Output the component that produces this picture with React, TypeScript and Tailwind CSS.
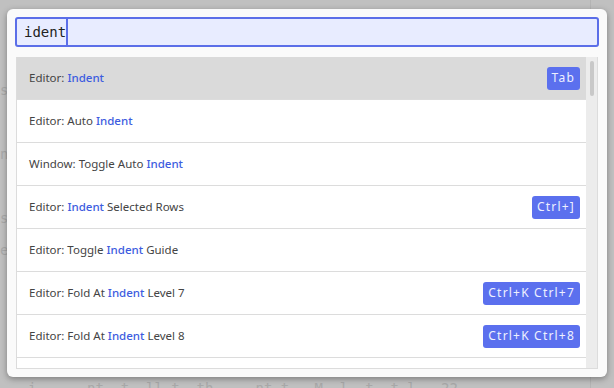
import React from 'react';

interface Command {
  before: string;
  after: string;
  keys?: string;
}

const commands: Command[] = [
  { before: 'Editor: ', after: '', keys: 'Tab' },
  { before: 'Editor: Auto ', after: '' },
  { before: 'Window: Toggle Auto ', after: '' },
  { before: 'Editor: ', after: ' Selected Rows', keys: 'Ctrl+]' },
  { before: 'Editor: Toggle ', after: ' Guide' },
  { before: 'Editor: Fold At ', after: ' Level 7', keys: 'Ctrl+K Ctrl+7' },
  { before: 'Editor: Fold At ', after: ' Level 8', keys: 'Ctrl+K Ctrl+8' },
  { before: 'Editor: Fold At ', after: ' Level 9' },
];

const editorLines = ['', '', '', '', '', 'ss', '', '  -', '', 'nn', '', '', '', 'ss', '', 'ee'];

const App: React.FC = () => {
  return (
    <div className="relative w-[614px] h-[388px] overflow-hidden bg-[#c0c0c0]">
      {/* Редактор под палитрой */}
      <div className="flex flex-col h-full font-['DejaVu_Sans_Mono',monospace] text-[14px] text-[#a9a9a9] whitespace-pre">
        <div className="flex-1 flex flex-col pt-[2px]">
          {editorLines.map((line, i) => (
            <div key={i} className="h-[16px] leading-[16px]">
              {line}
            </div>
          ))}
        </div>
        <div className="h-[8px] leading-[16px] pl-[28px] overflow-visible">
          {'i      nt  t  ll t  th     nt t   M  l  t  t l   22'}
        </div>
      </div>
      <div className="absolute top-0 bottom-0 left-[590px] w-px bg-[#b4b4b4]" />

      {/* Палитра команд */}
      <div className="absolute left-[7px] top-[9px] w-[600px] h-[368px] rounded-[6px] bg-[#fafafa] shadow-[0_2px_6px_rgba(0,0,0,0.35)] px-[8px] pt-[8px] flex flex-col">
        <div className="flex h-[30px] w-[584px] items-stretch rounded-[3px] border-2 border-[#5b6ee8] bg-[#e8ecff]">
          <span className="pl-[7px] flex items-center font-['DejaVu_Sans_Mono',monospace] text-[14px] text-[#222]">
            ident
          </span>
          <span className="w-[2px] bg-[#5b6ee8]" />
        </div>

        <div className="mt-[10px] ml-[1px] w-[582px] h-[312px] flex border border-[#dcdcdc] border-t-0 bg-white overflow-hidden">
          <div className="flex-1 flex flex-col">
            {commands.map((c, i) => (
              <div
                key={i}
                className={`h-[43px] shrink-0 flex items-center justify-between pl-[12px] pr-[6px] border-b border-[#dcdcdc] font-['Noto_Sans',sans-serif] text-[11.5px] text-[#444] ${
                  i === 0 ? 'bg-[#dadada]' : 'bg-white'
                }`}
              >
                <span>
                  {c.before}
                  <span className="font-medium text-[#3d5ce0]">Indent</span>
                  {c.after}
                </span>
                {c.keys && (
                  <span className="h-[23px] flex items-center rounded-[3px] bg-[#5b70ee] px-[5px] font-['Noto_Sans',sans-serif] text-[12px] tracking-[0.1em] text-[#eef0ff]">
                    {c.keys}
                  </span>
                )}
              </div>
            ))}
          </div>
          <div className="w-[11px] bg-[#ececec] flex justify-center pt-[4px]">
            <div className="w-[4px] h-[35px] rounded-full bg-[#c8c8c8]" />
          </div>
        </div>
      </div>
    </div>
  );
};

export default App;
